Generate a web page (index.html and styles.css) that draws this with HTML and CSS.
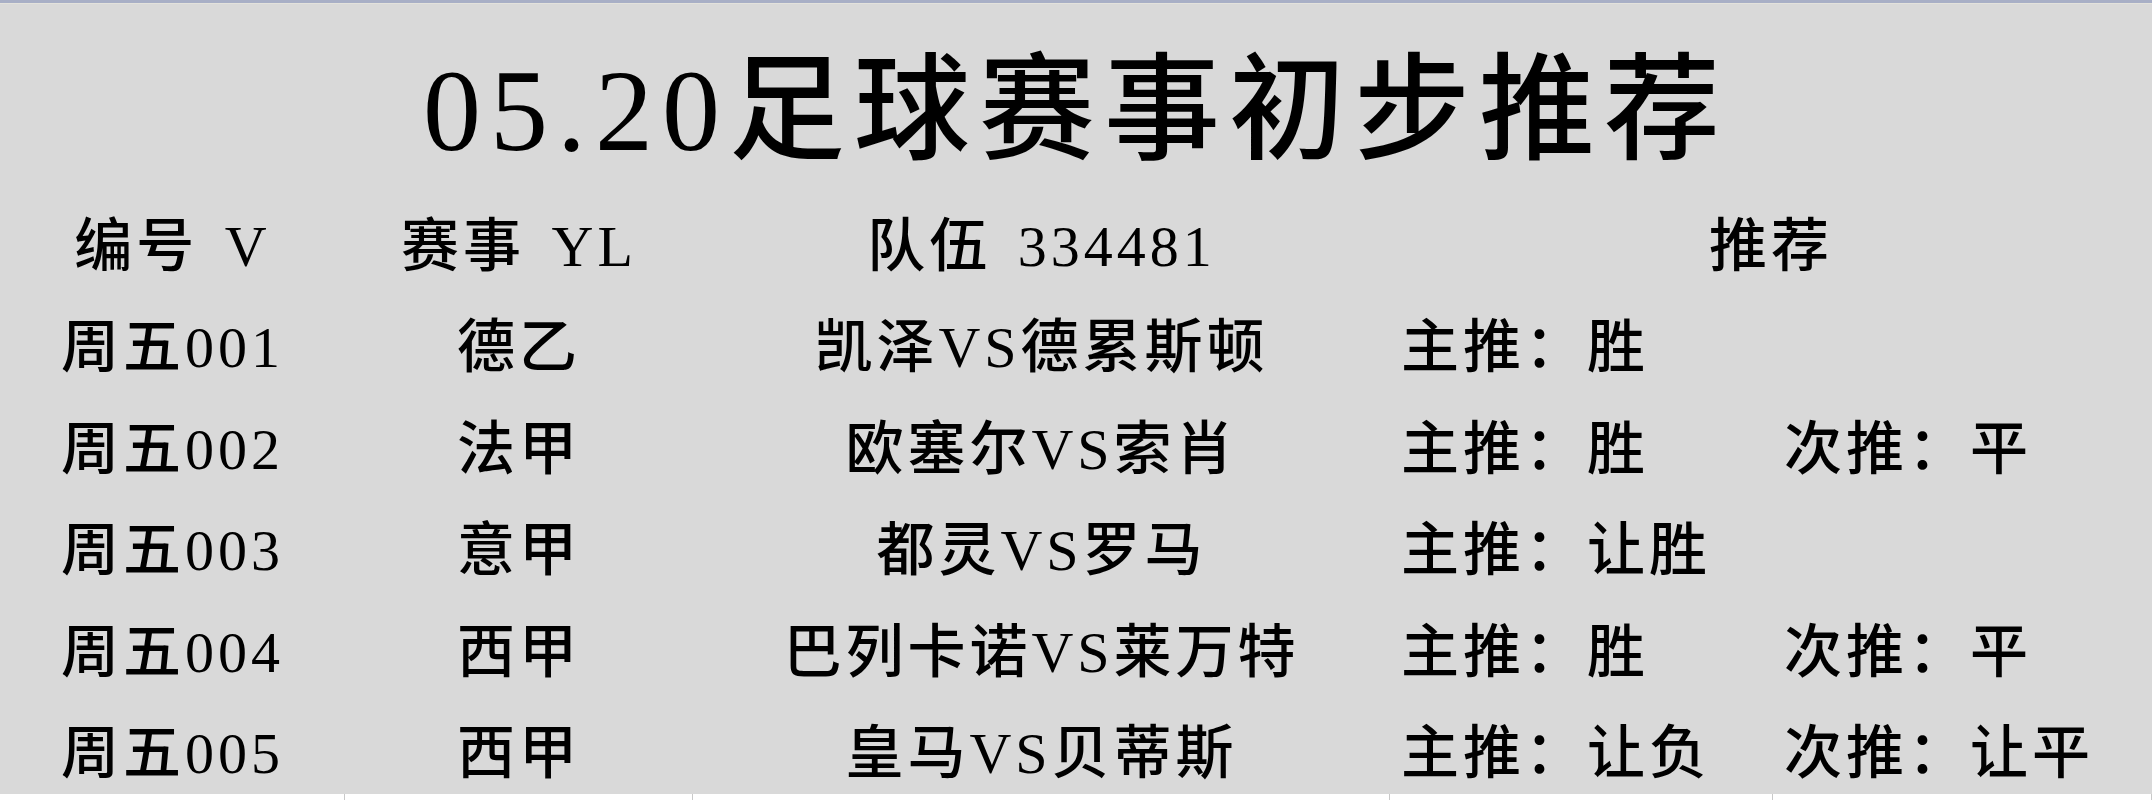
FILE: index.html
```html
<!DOCTYPE html>
<html lang="zh-CN">
<head>
<meta charset="utf-8">
<title>05.20足球赛事初步推荐</title>
<link rel="stylesheet" href="styles.css">
</head>
<body>
<div class="sheet">
  <div class="topbar"></div>
  <div class="title-area">
    <h1 class="title">05.20足球赛事初步推荐</h1>
  </div>
  <div class="table">
    <div class="cell c hdr">编号 V</div>
    <div class="cell c hdr">赛事 YL</div>
    <div class="cell c hdr">队伍 334481</div>
    <div class="cell c hdr span2">推荐</div>

    <div class="cell c">周五001</div>
    <div class="cell c">德乙</div>
    <div class="cell c">凯泽VS德累斯顿</div>
    <div class="cell l">主推：胜</div>
    <div class="cell l"></div>

    <div class="cell c">周五002</div>
    <div class="cell c">法甲</div>
    <div class="cell c">欧塞尔VS索肖</div>
    <div class="cell l">主推：胜</div>
    <div class="cell l">次推：平</div>

    <div class="cell c">周五003</div>
    <div class="cell c">意甲</div>
    <div class="cell c">都灵VS罗马</div>
    <div class="cell l">主推：让胜</div>
    <div class="cell l"></div>

    <div class="cell c">周五004</div>
    <div class="cell c">西甲</div>
    <div class="cell c">巴列卡诺VS莱万特</div>
    <div class="cell l">主推：胜</div>
    <div class="cell l">次推：平</div>

    <div class="cell c">周五005</div>
    <div class="cell c">西甲</div>
    <div class="cell c">皇马VS贝蒂斯</div>
    <div class="cell l">主推：让负</div>
    <div class="cell l">次推：让平</div>
  </div>
  <div class="blank-row">
    <div class="blank"></div>
    <div class="blank"></div>
    <div class="blank"></div>
    <div class="blank"></div>
    <div class="blank"></div>
  </div>
</div>
</body>
</html>
```
FILE: styles.css
```css
html, body {
  margin: 0;
  padding: 0;
  background: #ffffff;
}

.sheet {
  width: 2152px;
  height: 800px;
  overflow: hidden;
  background: #d9d9d9;
  color: #000000;
  font-family: "Liberation Serif", "Noto Sans CJK SC", serif;
}

.topbar {
  height: 3px;
  background: #a8afc6;
  border-bottom: 1px solid #e3e2dc;
}

.title-area {
  height: 181px;
  box-sizing: border-box;
  padding-top: 49px;
  display: flex;
  justify-content: center;
  align-items: flex-start;
}

.title {
  margin: 0;
  font-size: 116px;
  line-height: 116px;
  font-weight: 500;
  letter-spacing: 9px;
  white-space: nowrap;
}

.table {
  display: grid;
  grid-template-columns: 345px 348px 697px 383px 379px;
  grid-auto-rows: 101.5px;
}

.cell {
  display: flex;
  align-items: flex-end;
  box-sizing: border-box;
  padding-bottom: 11px;
  font-size: 58px;
  line-height: 58px;
  font-weight: 500;
  letter-spacing: 4px;
  white-space: nowrap;
}

.cell.c {
  justify-content: center;
}

.cell.l {
  justify-content: flex-start;
  padding-left: 11px;
}

.cell.hdr {
  word-spacing: 8px;
}

.cell.span2 {
  grid-column: span 2;
}

.blank-row {
  display: grid;
  grid-template-columns: 345px 348px 697px 383px 379px;
  height: 6px;
  background: #ffffff;
}

.blank {
  border-right: 1px solid #c9c9c9;
}
```
